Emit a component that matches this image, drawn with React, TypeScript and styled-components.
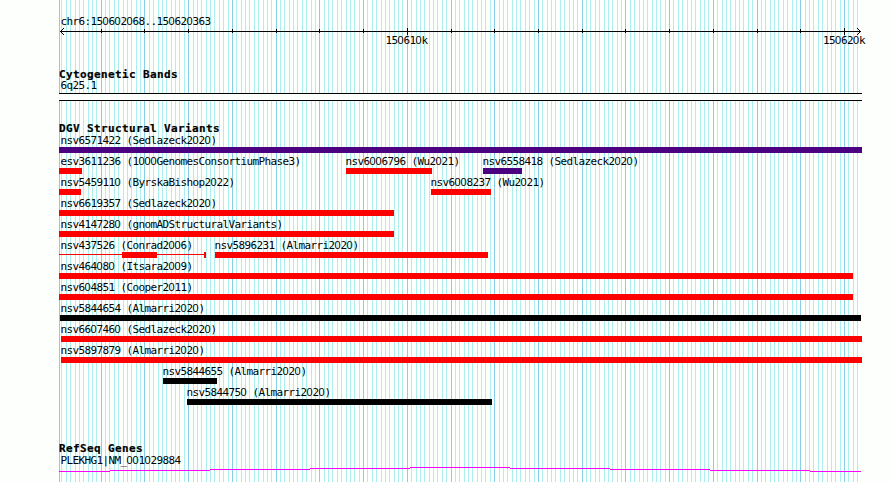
import React from "react"
import styled, { createGlobalStyle } from "styled-components";

interface IFeature {
    name: string;
    start: number;
    end: number;
    color: string;
    gapped?: boolean;
}

const RED = "#ff0000";
const INDIGO = "#4b0082";
const BLACK = "#000000";
const LEFT = 59;

const variants: IFeature[][] = [
    [{ name: "nsv6571422 (Sedlazeck2020)", start: 59, end: 862, color: INDIGO }],
    [
        { name: "esv3611236 (1000GenomesConsortiumPhase3)", start: 59, end: 82, color: RED },
        { name: "nsv6006796 (Wu2021)", start: 346, end: 432, color: RED },
        { name: "nsv6558418 (Sedlazeck2020)", start: 483, end: 522, color: INDIGO },
    ],
    [
        { name: "nsv5459110 (ByrskaBishop2022)", start: 59, end: 81, color: RED },
        { name: "nsv6008237 (Wu2021)", start: 431, end: 491, color: RED },
    ],
    [{ name: "nsv6619357 (Sedlazeck2020)", start: 59, end: 394, color: RED }],
    [{ name: "nsv4147280 (gnomADStructuralVariants)", start: 59, end: 394, color: RED }],
    [
        { name: "nsv437526 (Conrad2006)", start: 59, end: 206, color: RED, gapped: true },
        { name: "nsv5896231 (Almarri2020)", start: 215, end: 488, color: RED },
    ],
    [{ name: "nsv464080 (Itsara2009)", start: 59, end: 853, color: RED }],
    [{ name: "nsv604851 (Cooper2011)", start: 59, end: 853, color: RED }],
    [{ name: "nsv5844654 (Almarri2020)", start: 60, end: 861, color: BLACK }],
    [{ name: "nsv6607460 (Sedlazeck2020)", start: 61, end: 862, color: RED }],
    [{ name: "nsv5897879 (Almarri2020)", start: 61, end: 862, color: RED }],
    [{ name: "nsv5844655 (Almarri2020)", start: 163, end: 217, color: BLACK }],
    [{ name: "nsv5844750 (Almarri2020)", start: 187, end: 492, color: BLACK }],
];

// x, y and width of each step of the gene line
const geneSteps = [
    [0, 5, 51], [51, 4, 100], [151, 3, 100], [251, 2, 100], [351, 1, 100],
    [451, 2, 100], [551, 3, 100], [651, 4, 100], [751, 5, 51],
];

// one line every 100 bp, darker every 1000 bp
const STEP = 4.372;
const FIRST_MAJOR = 42.25;
const majors = Array.from({ length: 18 }, (_, i) => Math.floor(FIRST_MAJOR + i * STEP * 10));
const minors = Array.from({ length: 184 }, (_, i) => Math.floor(FIRST_MAJOR + (i - 9) * STEP))
    .filter((x) => x < 802 && !majors.includes(x));

const GridLines = () => {
    return <GridSvg width="803" height="482" shapeRendering="crispEdges">
        {minors.map((x) => <rect key={x} x={x} y="0" width="1" height="482" fill="#afeeee" />)}
        {[0, ...majors].map((x) => <rect key={x} x={x} y="0" width="1" height="482" fill="#87ceeb" />)}
    </GridSvg>
}

const Scale = () => {
    return <ScaleSvg width="803" height="9" shapeRendering="crispEdges">
        <rect x="1" y="4" width="801" height="1" />
        <path d="M4 1h1v1h-1zM3 2h1v1h-1zM2 3h1v1h-1zM2 5h1v1h-1zM3 6h1v1h-1zM4 7h1v1h-1z" />
        <path d="M798 1h1v1h-1zM799 2h1v1h-1zM800 3h1v1h-1zM800 5h1v1h-1zM799 6h1v1h-1zM798 7h1v1h-1z" />
        {majors.map((x, i) => {
            const labelled = i === 7 || i === 17;
            return <rect key={x} x={x} y={labelled ? 1 : 2} width="1" height={labelled ? 7 : 4} />
        })}
    </ScaleSvg>
}

// the mono face has a dotted zero, the sans one is plain
const Label = ({ text, indent = 1.5 }: { text: string; indent?: number }) => {
    return <LabelText $indent={indent}>
        {text.split(/(0+)/).map((part, i) => part[0] === "0" ? <Zero key={i}>{part}</Zero> : part)}
    </LabelText>
}

const FeatureRow = ({ features }: { features: IFeature[] }) => {
    return <Row>
        {features.map((feature, i) => {
            const previous = i === 0 ? LEFT : features[i - 1].end;
            return <Feature
                key={feature.name}
                $gap={feature.start - previous}
                $width={feature.end - feature.start}
            >
                <Label text={feature.name} indent={Math.max(LEFT + 1.5 - feature.start, -0.5)} />
                {feature.gapped
                    ? <GappedBar><Thin $width={63} /><Block $width={35} /><Thin $width={47} /><Block $width={2} /></GappedBar>
                    : <Bar $color={feature.color} />}
            </Feature>
        })}
    </Row>
}

const App = () => {
    return <Page>
        <GlobalStyle />
        <GridLines />
        <Overview>
            <Label text="chr6:150602068..150620363" />
            <Scale />
            <Positions>
                <Label text="150610k" />
                <Label text="150620k" />
            </Positions>
        </Overview>
        <Bands>
            <Title>Cytogenetic Bands</Title>
            <Label text="6q25.1" />
            <Band />
        </Bands>
        <Variants>
            <Title>DGV Structural Variants</Title>
            {variants.map((features) => <FeatureRow key={features[0].name} features={features} />)}
        </Variants>
        <Genes>
            <Title>RefSeq Genes</Title>
            <Label text="PLEKHG1|NM_001029884" />
            <GeneSvg width="802" height="6" shapeRendering="crispEdges">
                {geneSteps.map(([x, y, width]) => <rect key={x} x={x} y={y} width={width} height="1" />)}
            </GeneSvg>
        </Genes>
    </Page>
}

const GlobalStyle = createGlobalStyle`
    body {
        margin: 0;
        background-color: #fdfffd;
    }
`

const Page = styled.div`
    position: relative;
    box-sizing: border-box;
    width: 890px;
    height: 482px;
    padding-left: ${LEFT}px;
    overflow: hidden;

    background-color: #fdfffd;
    color: #000000;
`

const GridSvg = styled.svg`
    position: absolute;
    left: ${LEFT}px;
    top: 0;
`

const LabelText = styled.div<{ $indent: number }>`
    position: relative;
    height: 12px;
    text-indent: ${(props) => props.$indent}px;

    font: 11px/12px "DejaVu Sans Mono", monospace;
    letter-spacing: -0.622px;
    white-space: pre;
`

const Zero = styled.span`
    font-family: "Liberation Sans", sans-serif;
    letter-spacing: -0.118px;
`

const Title = styled.div`
    position: relative;
    height: 11px;
    padding-top: 1px;

    font: bold 11px/12px "DejaVu Sans Mono", monospace;
    letter-spacing: 0.378px;
    white-space: pre;
    -webkit-text-stroke: 0.2px #000000;
`

const Overview = styled.div`
    height: 53px;
    padding-top: 15px;
`

const ScaleSvg = styled.svg`
    position: relative;
    display: block;
`

const Positions = styled.div`
    display: flex;
    gap: 394px;
    margin-top: -2px;
    padding-left: 325px;
`

const Bands = styled.div`
    height: 54px;
`

const Band = styled.div`
    position: relative;
    box-sizing: border-box;
    width: 803px;
    height: 8px;
    margin-top: 1px;

    background-color: #fdfffd;
    border-top: 1px solid #000000;
    border-bottom: 1px solid #000000;
`

const Variants = styled.div`
    height: 320px;
`

const Row = styled.div`
    display: flex;
    height: 21px;
`

const Feature = styled.div<{ $gap: number; $width: number }>`
    flex: none;
    width: ${(props) => props.$width}px;
    margin-left: ${(props) => props.$gap}px;
`

const Bar = styled.div<{ $color: string }>`
    position: relative;
    height: 6px;
    margin-top: 1px;

    background-color: ${(props) => props.$color};
`

const GappedBar = styled.div`
    position: relative;
    display: flex;
    height: 6px;
    margin-top: 1px;
`

const Thin = styled.div<{ $width: number }>`
    width: ${(props) => props.$width}px;
    height: 1px;
    margin-top: 2px;

    background-color: ${RED};
`

const Block = styled.div<{ $width: number }>`
    width: ${(props) => props.$width}px;
    height: 6px;

    background-color: ${RED};
`

const Genes = styled.div`
    height: 40px;
`

const GeneSvg = styled.svg`
    position: relative;
    display: block;

    fill: #ff00ff;
`

export default App;
